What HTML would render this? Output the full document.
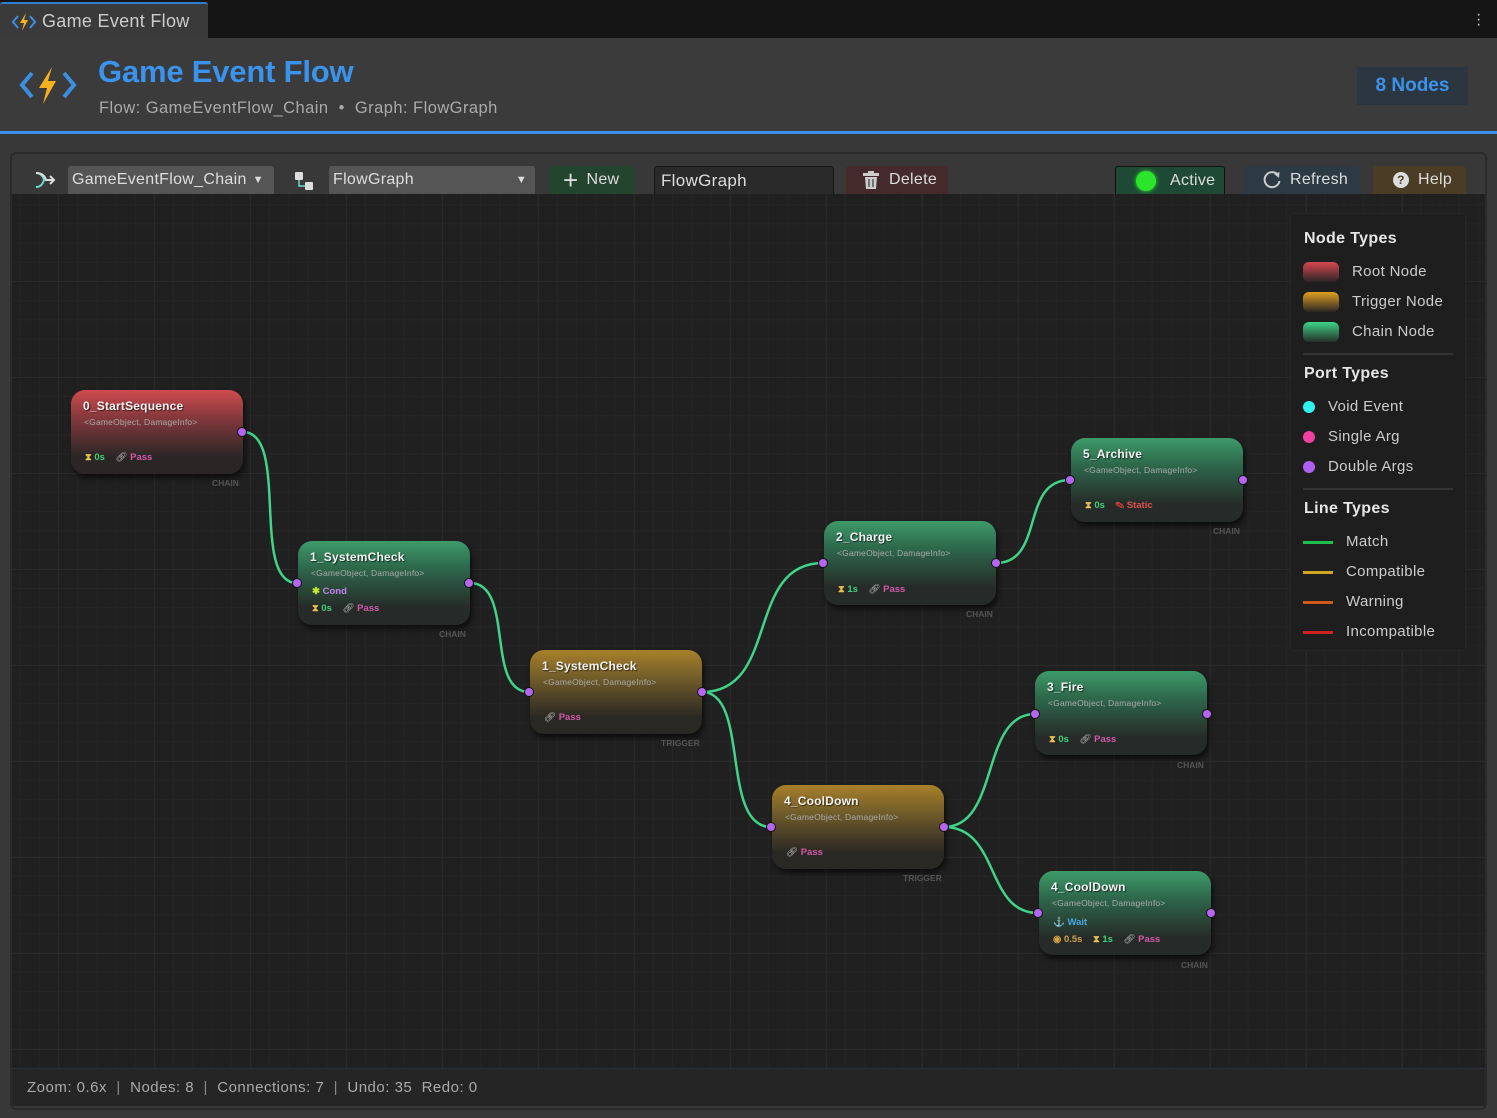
<!DOCTYPE html>
<html><head><meta charset="utf-8"><style>
*{box-sizing:border-box;margin:0;padding:0}
body{width:1497px;height:1118px;background:#383838;font-family:"Liberation Sans",sans-serif;position:relative;overflow:hidden;color:#ddd}
.abs{position:absolute}
.node{position:absolute;width:172px;height:84px;border-radius:14px;box-shadow:2px 4px 6px rgba(0,0,0,.6);}
.red{background:linear-gradient(#cf4b50 0%,#8a3a3e 30%,#2a2626 80%)}
.grn{background:linear-gradient(#3e9a69 0%,#2e6b4d 30%,#262a28 80%)}
.yel{background:linear-gradient(#a8802a 0%,#76602a 30%,#2a2824 80%)}
.node .t{position:absolute;left:12px;top:9px;font-size:12px;font-weight:bold;color:#f2f2f2;text-shadow:1px 1px 1px rgba(0,0,0,.6);letter-spacing:.2px}
.node .s{position:absolute;left:13px;top:27px;font-size:8.5px;color:#aaa;letter-spacing:.2px}
.node .r{position:absolute;left:14px;font-size:9.5px;font-weight:bold;white-space:nowrap}
.g{color:#3fd07a}.p{color:#d05aa8}.hg{color:#e8c050}.lk{color:#bbb;font-weight:normal}
.port{position:absolute;width:10px;height:10px;border-radius:50%;background:#b565f0;border:1.5px solid #111}
.lbl{position:absolute;font-size:8.5px;font-weight:bold;color:#555}
.btn{position:absolute;top:166px;height:28px;font-size:16px;color:#ddd;display:flex;align-items:center;border-radius:3px 3px 0 0;letter-spacing:.3px}
.leg{font-size:15px;color:#ccc;position:absolute;letter-spacing:.35px}
</style></head><body>
<div class="abs" style="left:0;top:0;width:1497px;height:38px;background:#151515"></div>
<div class="abs" style="left:0;top:2px;width:208px;height:36px;background:#3a3a3a;border-top:2px solid #2f7fd0;border-radius:3px 3px 0 0"></div>
<svg class="abs" style="left:11px;top:12px" width="26" height="20" viewBox="0 0 26 20"><path d="M7 4 L2 10 L7 16" stroke="#3a8fe0" stroke-width="2" fill="none"/><path d="M19 4 L24 10 L19 16" stroke="#3a8fe0" stroke-width="2" fill="none"/><path d="M15 1 L9 11 H13 L11 19 L17 8 H13 Z" fill="#f5b120"/></svg>
<div class="abs" style="left:42px;top:11px;font-size:18px;color:#ccc;letter-spacing:.3px">Game Event Flow</div>
<div class="abs" style="left:1476px;top:12px;color:#ccc;font-size:16px;line-height:5px">·<br>·<br>·</div>
<div class="abs" style="left:0;top:38px;width:1497px;height:93px;background:#3b3b3b"></div>
<div class="abs" style="left:0;top:131px;width:1497px;height:3px;background:#3a8fe8"></div>
<svg class="abs" style="left:18px;top:64px" width="60" height="42" viewBox="0 0 60 42"><path d="M14 9 L4 21 L14 33" stroke="#3a8fe0" stroke-width="4" fill="none"/><path d="M46 9 L56 21 L46 33" stroke="#3a8fe0" stroke-width="4" fill="none"/><path d="M34 3 L21 24 H29 L25 40 L38 17 H30 Z" fill="#f5b120"/></svg>
<div class="abs" style="left:98px;top:54px;font-size:31px;font-weight:bold;color:#3a93ec;letter-spacing:-.2px">Game Event Flow</div>
<div class="abs" style="left:99px;top:99px;font-size:16.5px;color:#aaa;letter-spacing:.45px">Flow: GameEventFlow_Chain &nbsp;•&nbsp; Graph: FlowGraph</div>
<div class="abs" style="left:1357px;top:67px;width:111px;height:38px;background:#2c3640;color:#3a93ec;font-size:19px;font-weight:bold;text-align:center;line-height:38px">8 Nodes</div>
<div class="abs" style="left:10px;top:152px;width:1477px;height:958px;border:2px solid #2a2a2a;border-radius:6px;background:#383838"></div>
<svg class="abs" style="left:34px;top:170px" width="22" height="20" viewBox="0 0 22 20"><path d="M2 3 Q8 3 10 10 Q8 17 2 17" stroke="#6dd8c8" stroke-width="2" fill="none"/><path d="M2 3 Q10 3 12 10 H20 M16 6 L20 10 L16 14" stroke="#ddd" stroke-width="2" fill="none"/></svg>
<div class="btn" style="left:68px;width:206px;background:#555;padding-left:4px">GameEventFlow_Chain <span style="font-size:11px;margin-left:6px">▼</span></div>
<svg class="abs" style="left:293px;top:170px" width="22" height="22" viewBox="0 0 22 22"><rect x="2" y="2" width="8" height="8" rx="1" fill="#ddd"/><rect x="12" y="12" width="8" height="8" rx="1" fill="#ddd"/><path d="M6 10 V16 H12" stroke="#6dd8c8" stroke-width="1.5" fill="none"/></svg>
<div class="btn" style="left:329px;width:206px;background:#555;padding-left:4px">FlowGraph<span style="font-size:11px;position:absolute;right:8px">▼</span></div>
<div class="btn" style="left:549px;width:86px;background:#23452f;padding-left:14px"><span style="font-size:26px;font-weight:300;margin-right:8px;line-height:20px">+</span>New</div>
<div class="btn" style="left:654px;width:180px;background:#2a2a2a;border:1px solid #151515;border-bottom:none;padding-left:6px;font-size:17px">FlowGraph</div>
<div class="btn" style="left:846px;width:102px;background:#442a2a;padding-left:16px"><svg width="18" height="18" viewBox="0 0 18 18" style="margin-right:9px"><rect x="1" y="2" width="16" height="3" fill="#ccc"/><rect x="6" y="0" width="6" height="2" fill="#ccc"/><path d="M3 6 H15 L14 18 H4 Z" fill="#ccc"/><path d="M7 8 V16 M11 8 V16" stroke="#444" stroke-width="1.3"/></svg>Delete</div>
<div class="btn" style="left:1115px;width:110px;background:#1e4a35;border:1px solid #111;border-bottom:none;padding-left:20px"><span style="width:20px;height:20px;border-radius:50%;background:#2be52b;box-shadow:0 0 5px #2be52b;margin-right:14px;display:inline-block"></span>Active</div>
<div class="btn" style="left:1244px;width:116px;background:#2c3a44;padding-left:18px"><svg width="20" height="20" viewBox="0 0 20 20" style="margin-right:8px"><path d="M16 5 A7.5 7.5 0 1 0 17.5 11" stroke="#ccc" stroke-width="2" fill="none"/><path d="M12 4 L17.5 2 L17 8 Z" fill="#ccc"/></svg>Refresh</div>
<div class="btn" style="left:1373px;width:93px;background:#4a3c25;padding-left:20px"><span style="width:16px;height:16px;border-radius:50%;background:#ddd;color:#4a3c25;font-size:12px;font-weight:bold;text-align:center;line-height:16px;margin-right:9px;display:inline-block">?</span>Help</div>
<div class="abs" style="left:12px;top:194px;width:1473px;height:874px;background-color:#202020;background-image:linear-gradient(#2a2a2a 1px,transparent 1px),linear-gradient(90deg,#2a2a2a 1px,transparent 1px),linear-gradient(#252525 1px,transparent 1px),linear-gradient(90deg,#252525 1px,transparent 1px);background-size:96px 96px,96px 96px,19.2px 19.2px,19.2px 19.2px;background-position:0 87px,46px 0,0 87px,46px 0"></div>
<div class="abs" style="left:12px;top:1068px;width:1473px;height:38px;background:#252525;border-top:1px solid #2a3038"></div>
<div class="abs" style="left:27px;top:1079px;font-size:15px;color:#aaa;white-space:pre;letter-spacing:.5px">Zoom: 0.6x  <span style="color:#888">|</span>  Nodes: 8  <span style="color:#888">|</span>  Connections: 7  <span style="color:#888">|</span>  Undo: 35  Redo: 0</div>
<svg class="abs" style="left:0;top:0" width="1497" height="1118">
<g stroke="#3fd488" stroke-width="2.5" fill="none">
<path d="M243 432 C290 432 250 583 297 583"/>
<path d="M470 583 C515 583 485 692 529 692"/>
<path d="M702 692 C780 692 745 563 823 563"/>
<path d="M702 692 C750 692 720 827 771 827"/>
<path d="M996 563 C1045 563 1020 480 1070 480"/>
<path d="M944 827 C1000 827 980 714 1035 714"/>
<path d="M944 827 C1000 827 985 913 1038 913"/>
</g></svg>
<div class="node red" style="left:71px;top:390px"><div class="t">0_StartSequence</div><div class="s">&lt;GameObject, DamageInfo&gt;</div><div class="r" style="top:62px"><span class="hg">⧗</span> <span class="g">0s</span> &nbsp;&nbsp;&nbsp;<span class="lk">🔗︎</span> <span class="p">Pass</span></div></div>
<div class="port" style="left:237px;top:427px"></div><div class="lbl" style="left:212px;top:478px">CHAIN</div>
<div class="node grn" style="left:298px;top:541px"><div class="t">1_SystemCheck</div><div class="s">&lt;GameObject, DamageInfo&gt;</div><div class="r" style="top:45px"><span style="color:#c8e830">✱</span> <span style="color:#c080f0">Cond</span></div><div class="r" style="top:62px"><span class="hg">⧗</span> <span class="g">0s</span> &nbsp;&nbsp;&nbsp;<span class="lk">🔗︎</span> <span class="p">Pass</span></div></div>
<div class="port" style="left:292px;top:578px"></div><div class="port" style="left:464px;top:578px"></div><div class="lbl" style="left:439px;top:629px">CHAIN</div>
<div class="node yel" style="left:530px;top:650px"><div class="t">1_SystemCheck</div><div class="s">&lt;GameObject, DamageInfo&gt;</div><div class="r" style="top:62px"><span class="lk">🔗︎</span> <span class="p">Pass</span></div></div>
<div class="port" style="left:524px;top:687px"></div><div class="port" style="left:697px;top:687px"></div><div class="lbl" style="left:661px;top:738px">TRIGGER</div>
<div class="node grn" style="left:824px;top:521px"><div class="t">2_Charge</div><div class="s">&lt;GameObject, DamageInfo&gt;</div><div class="r" style="top:63px"><span class="hg">⧗</span> <span class="g">1s</span> &nbsp;&nbsp;&nbsp;<span class="lk">🔗︎</span> <span class="p">Pass</span></div></div>
<div class="port" style="left:818px;top:558px"></div><div class="port" style="left:991px;top:558px"></div><div class="lbl" style="left:966px;top:609px">CHAIN</div>
<div class="node grn" style="left:1071px;top:438px"><div class="t">5_Archive</div><div class="s">&lt;GameObject, DamageInfo&gt;</div><div class="r" style="top:62px"><span class="hg">⧗</span> <span class="g">0s</span> &nbsp;&nbsp;&nbsp;<span style="color:#e04040">✎</span> <span style="color:#e05050">Static</span></div></div>
<div class="port" style="left:1065px;top:475px"></div><div class="port" style="left:1238px;top:475px"></div><div class="lbl" style="left:1213px;top:526px">CHAIN</div>
<div class="node grn" style="left:1035px;top:671px"><div class="t">3_Fire</div><div class="s">&lt;GameObject, DamageInfo&gt;</div><div class="r" style="top:63px"><span class="hg">⧗</span> <span class="g">0s</span> &nbsp;&nbsp;&nbsp;<span class="lk">🔗︎</span> <span class="p">Pass</span></div></div>
<div class="port" style="left:1030px;top:709px"></div><div class="port" style="left:1202px;top:709px"></div><div class="lbl" style="left:1177px;top:760px">CHAIN</div>
<div class="node yel" style="left:772px;top:785px"><div class="t">4_CoolDown</div><div class="s">&lt;GameObject, DamageInfo&gt;</div><div class="r" style="top:62px"><span class="lk">🔗︎</span> <span class="p">Pass</span></div></div>
<div class="port" style="left:766px;top:822px"></div><div class="port" style="left:939px;top:822px"></div><div class="lbl" style="left:903px;top:873px">TRIGGER</div>
<div class="node grn" style="left:1039px;top:871px"><div class="t">4_CoolDown</div><div class="s">&lt;GameObject, DamageInfo&gt;</div><div class="r" style="top:46px"><span style="color:#3aa0e0">⚓</span> <span style="color:#4aa8e0">Wait</span></div><div class="r" style="top:63px"><span style="color:#d0a040">◉</span> <span style="color:#d0a050">0.5s</span> &nbsp;&nbsp;&nbsp;<span class="hg">⧗</span> <span class="g">1s</span> &nbsp;&nbsp;&nbsp;<span class="lk">🔗︎</span> <span class="p">Pass</span></div></div>
<div class="port" style="left:1033px;top:908px"></div><div class="port" style="left:1206px;top:908px"></div><div class="lbl" style="left:1181px;top:960px">CHAIN</div>
<div class="abs" style="left:1290px;top:213px;width:176px;height:438px;background:#1e1e1e;border:1px solid #262626;border-radius:3px"></div>
<div class="leg" style="left:1304px;top:230px;font-weight:bold;font-size:16px;color:#e6e6e6">Node Types</div>
<div class="abs" style="left:1303px;top:262px;width:36px;height:20px;border-radius:6px;background:linear-gradient(#d84850,#2a2626)"></div><div class="leg" style="left:1352px;top:263px">Root Node</div>
<div class="abs" style="left:1303px;top:292px;width:36px;height:20px;border-radius:6px;background:linear-gradient(#e0a020,#2a2624)"></div><div class="leg" style="left:1352px;top:293px">Trigger Node</div>
<div class="abs" style="left:1303px;top:322px;width:36px;height:20px;border-radius:6px;background:linear-gradient(#3ed488,#263028)"></div><div class="leg" style="left:1352px;top:323px">Chain Node</div>
<div class="abs" style="left:1303px;top:353px;width:150px;height:2px;background:#333"></div>
<div class="leg" style="left:1304px;top:365px;font-weight:bold;font-size:16px;color:#e6e6e6">Port Types</div>
<div class="abs" style="left:1303px;top:401px;width:12px;height:12px;border-radius:50%;background:#30f0f0"></div><div class="leg" style="left:1328px;top:398px">Void Event</div>
<div class="abs" style="left:1303px;top:431px;width:12px;height:12px;border-radius:50%;background:#f040a0"></div><div class="leg" style="left:1328px;top:428px">Single Arg</div>
<div class="abs" style="left:1303px;top:461px;width:12px;height:12px;border-radius:50%;background:#b060f0"></div><div class="leg" style="left:1328px;top:458px">Double Args</div>
<div class="abs" style="left:1303px;top:488px;width:150px;height:2px;background:#333"></div>
<div class="leg" style="left:1304px;top:500px;font-weight:bold;font-size:16px;color:#e6e6e6">Line Types</div>
<div class="abs" style="left:1303px;top:541px;width:30px;height:3px;background:#20c050"></div><div class="leg" style="left:1346px;top:533px">Match</div>
<div class="abs" style="left:1303px;top:571px;width:30px;height:3px;background:#d0a820"></div><div class="leg" style="left:1346px;top:563px">Compatible</div>
<div class="abs" style="left:1303px;top:601px;width:30px;height:3px;background:#d05818"></div><div class="leg" style="left:1346px;top:593px">Warning</div>
<div class="abs" style="left:1303px;top:631px;width:30px;height:3px;background:#d02020"></div><div class="leg" style="left:1346px;top:623px">Incompatible</div>
</body></html>
